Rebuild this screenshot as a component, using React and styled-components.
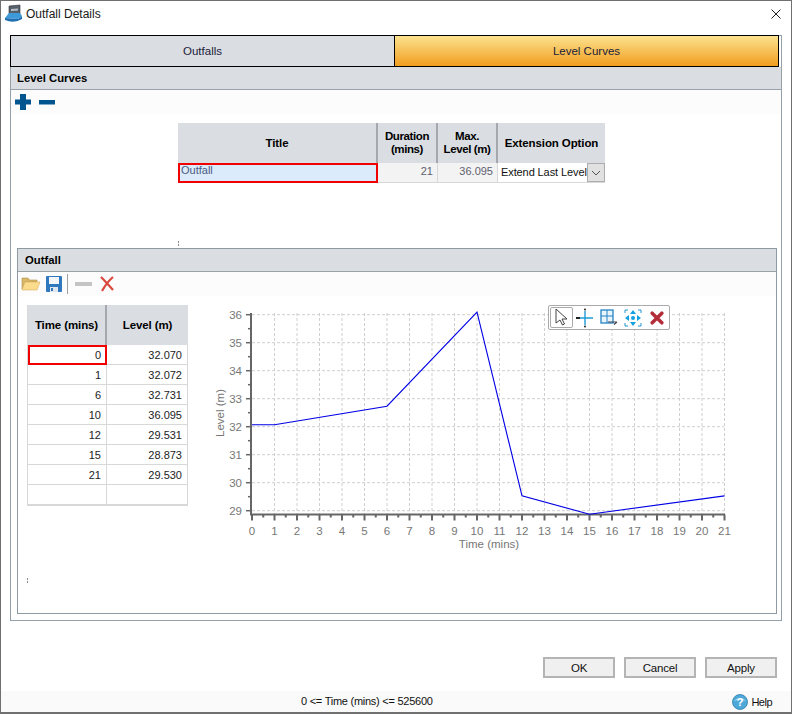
import React from "react";
import styled, { createGlobalStyle } from "styled-components";

const GlobalStyle = createGlobalStyle`
  html, body {
    margin: 0;
    padding: 0;
    background: #fff;
  }
  * {
    box-sizing: border-box;
  }
`;

const Window = styled("div")`
  width: 792px;
  height: 714px;
  display: flex;
  flex-direction: column;
  background: #fff;
  border: 1px solid #707070;
  border-bottom-width: 2px;
  font-family: "Liberation Sans", Arial, sans-serif;
  font-size: 12px;
  color: #111;
  overflow: hidden;
`;

const TitleBar = styled("div")`
  height: 34px;
  flex-shrink: 0;
  display: flex;
  align-items: center;
  padding: 0 10px 9px 3px;
  gap: 3px;
`;

const TitleText = styled("span")`
  flex: 1;
  font-size: 12px;
  color: #1a1a1a;
`;

const OuterPanel = styled("div")`
  width: 772px;
  height: 586px;
  margin-left: 9px;
  flex-shrink: 0;
  border: 1px solid #96a0a8;
  display: flex;
  flex-direction: column;
`;

const TabStrip = styled("div")`
  display: flex;
  height: 32px;
  margin: -1px 0 0 -1px;
  flex-shrink: 0;
`;

const Tab = styled("div")`
  width: ${(p) => p.$width}px;
  display: flex;
  align-items: center;
  justify-content: center;
  border: 1px solid #000;
  border-left-width: ${(p) => (p.$first ? 1 : 0)}px;
  font-size: 11.5px;
  color: #20203a;
  background: ${(p) =>
    p.$active ? "linear-gradient(#fce28f, #f19e1f)" : "#dadee2"};
`;

const SectionHeader = styled("div")`
  height: ${(p) => p.$height}px;
  flex-shrink: 0;
  display: flex;
  align-items: center;
  padding-left: ${(p) => p.$pad}px;
  background: #dadee2;
  border-bottom: 1px solid #9aa2a9;
  font-weight: bold;
  font-size: 11.3px;
  color: #000;
`;

const PlusMinusBar = styled("div")`
  height: 24px;
  flex-shrink: 0;
  display: flex;
  align-items: center;
  gap: 8px;
  padding-left: 4px;
  background: #fcfcfc;
`;

const CurveTable = styled("div")`
  display: grid;
  grid-template-columns: 200px 60px 60px 107px;
  grid-template-rows: 40px 20px;
  width: 427px;
  margin: 9px 0 0 167px;
  flex-shrink: 0;
`;

const HeadCell = styled("div")`
  display: flex;
  align-items: center;
  justify-content: center;
  text-align: center;
  line-height: 13px;
  font-weight: bold;
  font-size: 11.5px;
  letter-spacing: ${(p) => (p.$tight ? "-0.4px" : "-0.1px")};
  color: #000;
  background: #dadee2;
  border-right: ${(p) => (p.$noEdge ? 0 : 2)}px solid #a3a9ae;
`;

const TitleCell = styled("div")`
  border: 2px solid #f00000;
  background: #dcebfb;
  color: #4a5a82;
  padding: 0 1px;
  line-height: 11px;
  font-size: 11px;
`;

const ReadOnlyCell = styled("div")`
  display: flex;
  align-items: center;
  justify-content: flex-end;
  padding: 0 4px 3px 0;
  background: #f3f3f3;
  color: #5f5f6f;
  font-size: 11px;
  border-right: 1px solid #d8d8d8;
  border-bottom: 1px solid #d8d8d8;
`;

const SelectCell = styled("div")`
  display: flex;
  align-items: stretch;
  justify-content: space-between;
  min-width: 0;
  background: #fff;
  border-bottom: 1px solid #d8d8d8;
  padding-left: 3px;
  font-size: 11px;
  letter-spacing: -0.1px;
  white-space: nowrap;
  line-height: 18px;
`;

const SelectButton = styled("div")`
  width: 18px;
  flex-shrink: 0;
  display: flex;
  align-items: center;
  justify-content: center;
  background: #e1e1e1;
  border: 1px solid #adadad;
`;

const SplitterDots = styled("div")`
  width: 1px;
  height: 5px;
  margin: ${(p) => p.$margin};
  flex-shrink: 0;
  background: repeating-linear-gradient(#8a8a8a 0 2px, transparent 2px 3px);
`;

const InnerPanel = styled("div")`
  height: 366px;
  margin: 2px 4px 0 6px;
  flex-shrink: 0;
  border: 1px solid #8f9ba3;
  display: flex;
  flex-direction: column;
`;

const IconBar = styled("div")`
  height: 24px;
  flex-shrink: 0;
  display: flex;
  align-items: center;
  gap: 5px;
  padding-left: 3px;
  background: #fcfcfc;
`;

const BarDivider = styled("div")`
  width: 1px;
  height: 20px;
  background: #a0a0a0;
  margin: 0 2px 0 0;
`;

const PlotRow = styled("div")`
  display: flex;
  align-items: flex-start;
  gap: 17px;
  padding: 4px 0 0 9px;
`;

const PointGrid = styled("div")`
  display: grid;
  grid-template-columns: 79px 81px;
  grid-auto-rows: 20px;
  grid-template-rows: 40px;
  margin-top: 5px;
  border-left: 1px solid #d8d8d8;
  border-bottom: 1px solid #d8d8d8;
`;

const PointCell = styled("div")`
  display: flex;
  align-items: center;
  justify-content: flex-end;
  padding-right: 5px;
  font-size: 11px;
  color: #222;
  background: #fff;
  border-right: 1px solid #d8d8d8;
  border-bottom: 1px solid #d8d8d8;
  ${(p) => p.$selected && "border: 2px solid #f00000; padding-right: 4px;"}
`;

const ChartWrap = styled("div")`
  position: relative;
  width: 540px;
  height: 270px;
  flex-shrink: 0;
`;

const ChartTools = styled("div")`
  position: absolute;
  left: 343px;
  top: 5px;
  width: 122px;
  height: 25px;
  display: flex;
  align-items: center;
  padding-left: 1px;
  background: #fff;
  border: 1px solid #aaa;
  border-radius: 2px;
`;

const ChartTool = styled("div")`
  width: 24px;
  height: 23px;
  display: flex;
  align-items: center;
  justify-content: center;
  ${(p) => p.$selected && "border: 1px solid #aaa; border-radius: 2px; width: 23px; height: 21px;"}
`;

const ButtonRow = styled("div")`
  display: flex;
  justify-content: flex-end;
  gap: 9px;
  padding-right: 14px;
  margin-top: 36px;
  flex-shrink: 0;
`;

const DialogButton = styled("div")`
  width: 72px;
  height: 21px;
  display: flex;
  align-items: center;
  justify-content: center;
  background: #f0f0f0;
  border: 2px solid #b4b4b4;
  color: #111;
  font-size: 11.5px;
  letter-spacing: -0.2px;
`;

const StatusBar = styled("div")`
  margin-top: auto;
  height: 21px;
  flex-shrink: 0;
  display: flex;
  align-items: center;
  background: #fafafa;
  position: relative;
  padding-right: 19px;
  justify-content: flex-end;
  gap: 3px;
`;

const StatusText = styled("span")`
  position: absolute;
  left: 300px;
  top: 4px;
  font-size: 11px;
  letter-spacing: -0.25px;
`;

const HelpLabel = styled("span")`
  font-size: 11px;
  letter-spacing: -0.5px;
`;

const times = [0, 1, 6, 10, 12, 15, 21];
const levels = [32.07, 32.072, 32.731, 36.095, 29.531, 28.873, 29.53];
const rows = [
  ["0", "32.070"],
  ["1", "32.072"],
  ["6", "32.731"],
  ["10", "36.095"],
  ["12", "29.531"],
  ["15", "28.873"],
  ["21", "29.530"],
  ["", ""],
];

// chart svg starts at page x=205, y=300
const px = (t) => 47 + t * 22.5;
const py = (v) => 210.7 - (v - 29) * 28;

const AppIcon = () => (
  <svg width="19" height="20" viewBox="0 0 19 20">
    <path d="M5 2 L16 1 L16 10 L5 11 Z" fill="#55606a" stroke="#333" strokeWidth="0.6" />
    <path d="M7 5 L14 4.5 L14 6.5 L7 7 Z" fill="#b8c0c8" />
    <path d="M1 14 L5 9 L16 9 L18 12 L14 15 Z" fill="#3d9ad8" />
    <path d="M1 14 L14 15 L18 12 L18 15 Q10 20 1 16 Z" fill="#1f6fb0" />
  </svg>
);

const PlusIcon = () => (
  <svg width="16" height="16" viewBox="0 0 16 16">
    <path d="M5 0h6v5.500h5v5h-5V16H5v-5.500H0v-5h5z" fill="#00558f" />
  </svg>
);

const MinusIcon = () => (
  <svg width="16" height="16" viewBox="0 0 16 16">
    <rect x="0" y="6" width="16" height="4.500" fill="#00558f" />
  </svg>
);

const FolderIcon = () => (
  <svg width="20" height="16" viewBox="0 0 20 16">
    <path d="M1 2h6l1.500 2H16v2H4L1 13z" fill="#d9b765" stroke="#b09050" strokeWidth="0.6" />
    <path d="M4 6h15l-3 8H1z" fill="#fbdc8c" stroke="#d8b060" strokeWidth="0.6" />
  </svg>
);

const SaveIcon = () => (
  <svg width="16" height="16" viewBox="0 0 16 16">
    <rect width="16" height="16" rx="1" fill="#2f78bd" />
    <rect x="3" y="1" width="10" height="7" fill="#f2f6fa" />
    <rect x="4" y="11" width="8" height="5" fill="#dfe6ee" />
    <rect x="5" y="12" width="2" height="3" fill="#2f78bd" />
  </svg>
);

const GreyMinusIcon = () => (
  <svg width="17" height="16" viewBox="0 0 17 16">
    <rect x="0" y="6" width="17" height="4" fill="#c4c4c4" />
  </svg>
);

const RedCrossIcon = () => (
  <svg width="16" height="16" viewBox="0 0 16 16" style={{ marginLeft: 2 }}>
    <path d="M2 1 Q7 6 14 14 M14 1 Q8 6 3 15" fill="none" stroke="#d8483c" strokeWidth="2.200" />
  </svg>
);

const ChevronIcon = () => (
  <svg width="10" height="6" viewBox="0 0 10 6">
    <path d="M1 1 L5 5 L9 1" fill="none" stroke="#555" strokeWidth="1" />
  </svg>
);

const CloseIcon = () => (
  <svg width="10" height="10" viewBox="0 0 10 10">
    <path d="M0.500 0.500 L9.500 9.500 M9.500 0.500 L0.500 9.500" stroke="#222" strokeWidth="1" />
  </svg>
);

const HelpIcon = () => (
  <svg width="16" height="16" viewBox="0 0 16 16">
    <circle cx="8" cy="8" r="7.500" fill="#4fa9d8" stroke="#2a7fb0" strokeWidth="0.800" />
    <path d="M2 7 Q8 1 14 7 Q8 5 2 7" fill="#a8dcf2" />
    <text x="8" y="12" textAnchor="middle" fontSize="11" fontWeight="bold" fill="#fff" fontFamily="Liberation Sans">?</text>
  </svg>
);

const PointerTool = () => (
  <svg width="16" height="19" viewBox="0 0 16 19">
    <path d="M2 1 L2 15 L6 12 L8.500 17 L10.500 16 L8 11 L13 11 Z" fill="#fff" stroke="#444" strokeWidth="1" />
  </svg>
);

const CrosshairTool = () => (
  <svg width="20" height="20" viewBox="0 0 20 20">
    <path d="M10 3 V17 M3 10 H18" stroke="#1e9ad6" strokeWidth="1.400" />
    <circle cx="10" cy="1.500" r="1" fill="#222" />
    <circle cx="10" cy="18.500" r="1" fill="#222" />
    <path d="M1 9 h4 v2 h-4z" fill="#222" />
  </svg>
);

const ZoomBoxTool = () => (
  <svg width="18" height="18" viewBox="0 0 18 18">
    <rect x="1" y="1" width="12" height="13" fill="#e9f4fb" stroke="#2484c4" strokeWidth="1.300" />
    <path d="M1 7 H13 M7 1 V14" stroke="#2484c4" strokeWidth="1" />
    <path d="M8 13 H17 M14 15.500 L17 13" stroke="#445" strokeWidth="1.200" fill="none" />
  </svg>
);

const FitTool = () => (
  <svg width="18" height="18" viewBox="0 0 18 18">
    <path d="M1 4 V1 H4 M14 1 H17 V4 M17 14 V17 H14 M4 17 H1 V14" fill="none" stroke="#2494d0" strokeWidth="1" />
    <path d="M9 1 L12 5 H6 Z M9 17 L12 13 H6 Z M1 9 L5 6 V12 Z M17 9 L13 6 V12 Z" fill="#12a0e0" />
    <circle cx="9" cy="9" r="2" fill="#12a0e0" />
  </svg>
);

const DeleteTool = () => (
  <svg width="14" height="14" viewBox="0 0 16 16">
    <path d="M2.500 2.500 L13.500 13.500 M13.500 2.500 L2.500 13.500" stroke="#b32c3a" strokeWidth="4" strokeLinecap="round" />
  </svg>
);

const Chart = () => {
  const tx = Array.from({ length: 22 }, (_, i) => i);
  const ty = [29, 30, 31, 32, 33, 34, 35, 36];
  const axisY = 214.5;
  return (
    <svg width="540" height="270" viewBox="0 0 540 270">
      {tx.slice(1).map((t) => (
        <line key={t} x1={px(t)} x2={px(t)} y1="13" y2={axisY} stroke="#cfcfcf" strokeDasharray="3 2" />
      ))}
      {ty.map((v) => (
        <line key={v} x1="47" x2="519" y1={py(v)} y2={py(v)} stroke="#cfcfcf" strokeDasharray="3 2" />
      ))}
      <path d={`M46 13 V${axisY} H520`} fill="none" stroke="#666" strokeWidth="2" />
      {tx.map((t) => (
        <line key={t} x1={px(t)} x2={px(t)} y1={axisY} y2={axisY + 6} stroke="#666" strokeWidth="2" />
      ))}
      {tx.slice(0, -1).map((t) => (
        <line key={t} x1={px(t + 0.5)} x2={px(t + 0.5)} y1={axisY} y2={axisY + 3} stroke="#666" strokeWidth="2" />
      ))}
      {ty.map((v) => (
        <line key={v} x1="41" x2="46" y1={py(v)} y2={py(v)} stroke="#666" strokeWidth="1.500" />
      ))}
      {ty.slice(0, -1).map((v) => (
        <line key={v} x1="43" x2="46" y1={py(v + 0.5)} y2={py(v + 0.5)} stroke="#666" strokeWidth="1.500" />
      ))}
      <polyline
        points={times.map((t, i) => `${px(t)},${py(levels[i])}`).join(" ")}
        fill="none"
        stroke="#0000e6"
        strokeWidth="1.100"
      />
      <g fontFamily="Liberation Sans" fontSize="11.500" fill="#777">
        {tx.map((t) => (
          <text key={t} x={px(t)} y="235" textAnchor="middle">{t}</text>
        ))}
        {ty.map((v) => (
          <text key={v} x="37" y={py(v) + 4} textAnchor="end">{v}</text>
        ))}
        <text x="284" y="248" textAnchor="middle">Time (mins)</text>
        <text transform="translate(19 113) rotate(-90)" textAnchor="middle">Level (m)</text>
      </g>
    </svg>
  );
};

const App = () => {
  return (
    <Window>
      <GlobalStyle />
      <TitleBar>
        <AppIcon />
        <TitleText>Outfall Details</TitleText>
        <CloseIcon />
      </TitleBar>
      <OuterPanel>
        <TabStrip>
          <Tab $width={385} $first>Outfalls</Tab>
          <Tab $width={384} $active>Level Curves</Tab>
        </TabStrip>
        <SectionHeader $height={23} $pad={6}>Level Curves</SectionHeader>
        <PlusMinusBar>
          <PlusIcon />
          <MinusIcon />
        </PlusMinusBar>
        <CurveTable>
          <HeadCell>Title</HeadCell>
          <HeadCell $tight>Duration<br />(mins)</HeadCell>
          <HeadCell $tight>Max.<br />Level (m)</HeadCell>
          <HeadCell $noEdge>Extension Option</HeadCell>
          <TitleCell>Outfall</TitleCell>
          <ReadOnlyCell>21</ReadOnlyCell>
          <ReadOnlyCell>36.095</ReadOnlyCell>
          <SelectCell>
            Extend Last Level
            <SelectButton><ChevronIcon /></SelectButton>
          </SelectCell>
        </CurveTable>
        <SplitterDots $margin="58px 0 0 167px" />
        <InnerPanel>
          <SectionHeader $height={23} $pad={7}>Outfall</SectionHeader>
          <IconBar>
            <FolderIcon />
            <SaveIcon />
            <BarDivider />
            <GreyMinusIcon />
            <RedCrossIcon />
          </IconBar>
          <PlotRow>
            <PointGrid>
              <HeadCell>Time (mins)</HeadCell>
              <HeadCell $noEdge>Level (m)</HeadCell>
              {rows.map(([t, l], i) => (
                <React.Fragment key={i}>
                  <PointCell $selected={i === 0}>{t}</PointCell>
                  <PointCell>{l}</PointCell>
                </React.Fragment>
              ))}
            </PointGrid>
            <ChartWrap>
              <Chart />
              <ChartTools>
                <ChartTool $selected><PointerTool /></ChartTool>
                <ChartTool><CrosshairTool /></ChartTool>
                <ChartTool><ZoomBoxTool /></ChartTool>
                <ChartTool><FitTool /></ChartTool>
                <ChartTool><DeleteTool /></ChartTool>
              </ChartTools>
            </ChartWrap>
          </PlotRow>
          <SplitterDots $margin="8px 0 0 9px" />
        </InnerPanel>
      </OuterPanel>
      <ButtonRow>
        <DialogButton>OK</DialogButton>
        <DialogButton>Cancel</DialogButton>
        <DialogButton>Apply</DialogButton>
      </ButtonRow>
      <StatusBar>
        <StatusText>0 &lt;= Time (mins) &lt;= 525600</StatusText>
        <HelpIcon />
        <HelpLabel>Help</HelpLabel>
      </StatusBar>
    </Window>
  );
};

export default App;
